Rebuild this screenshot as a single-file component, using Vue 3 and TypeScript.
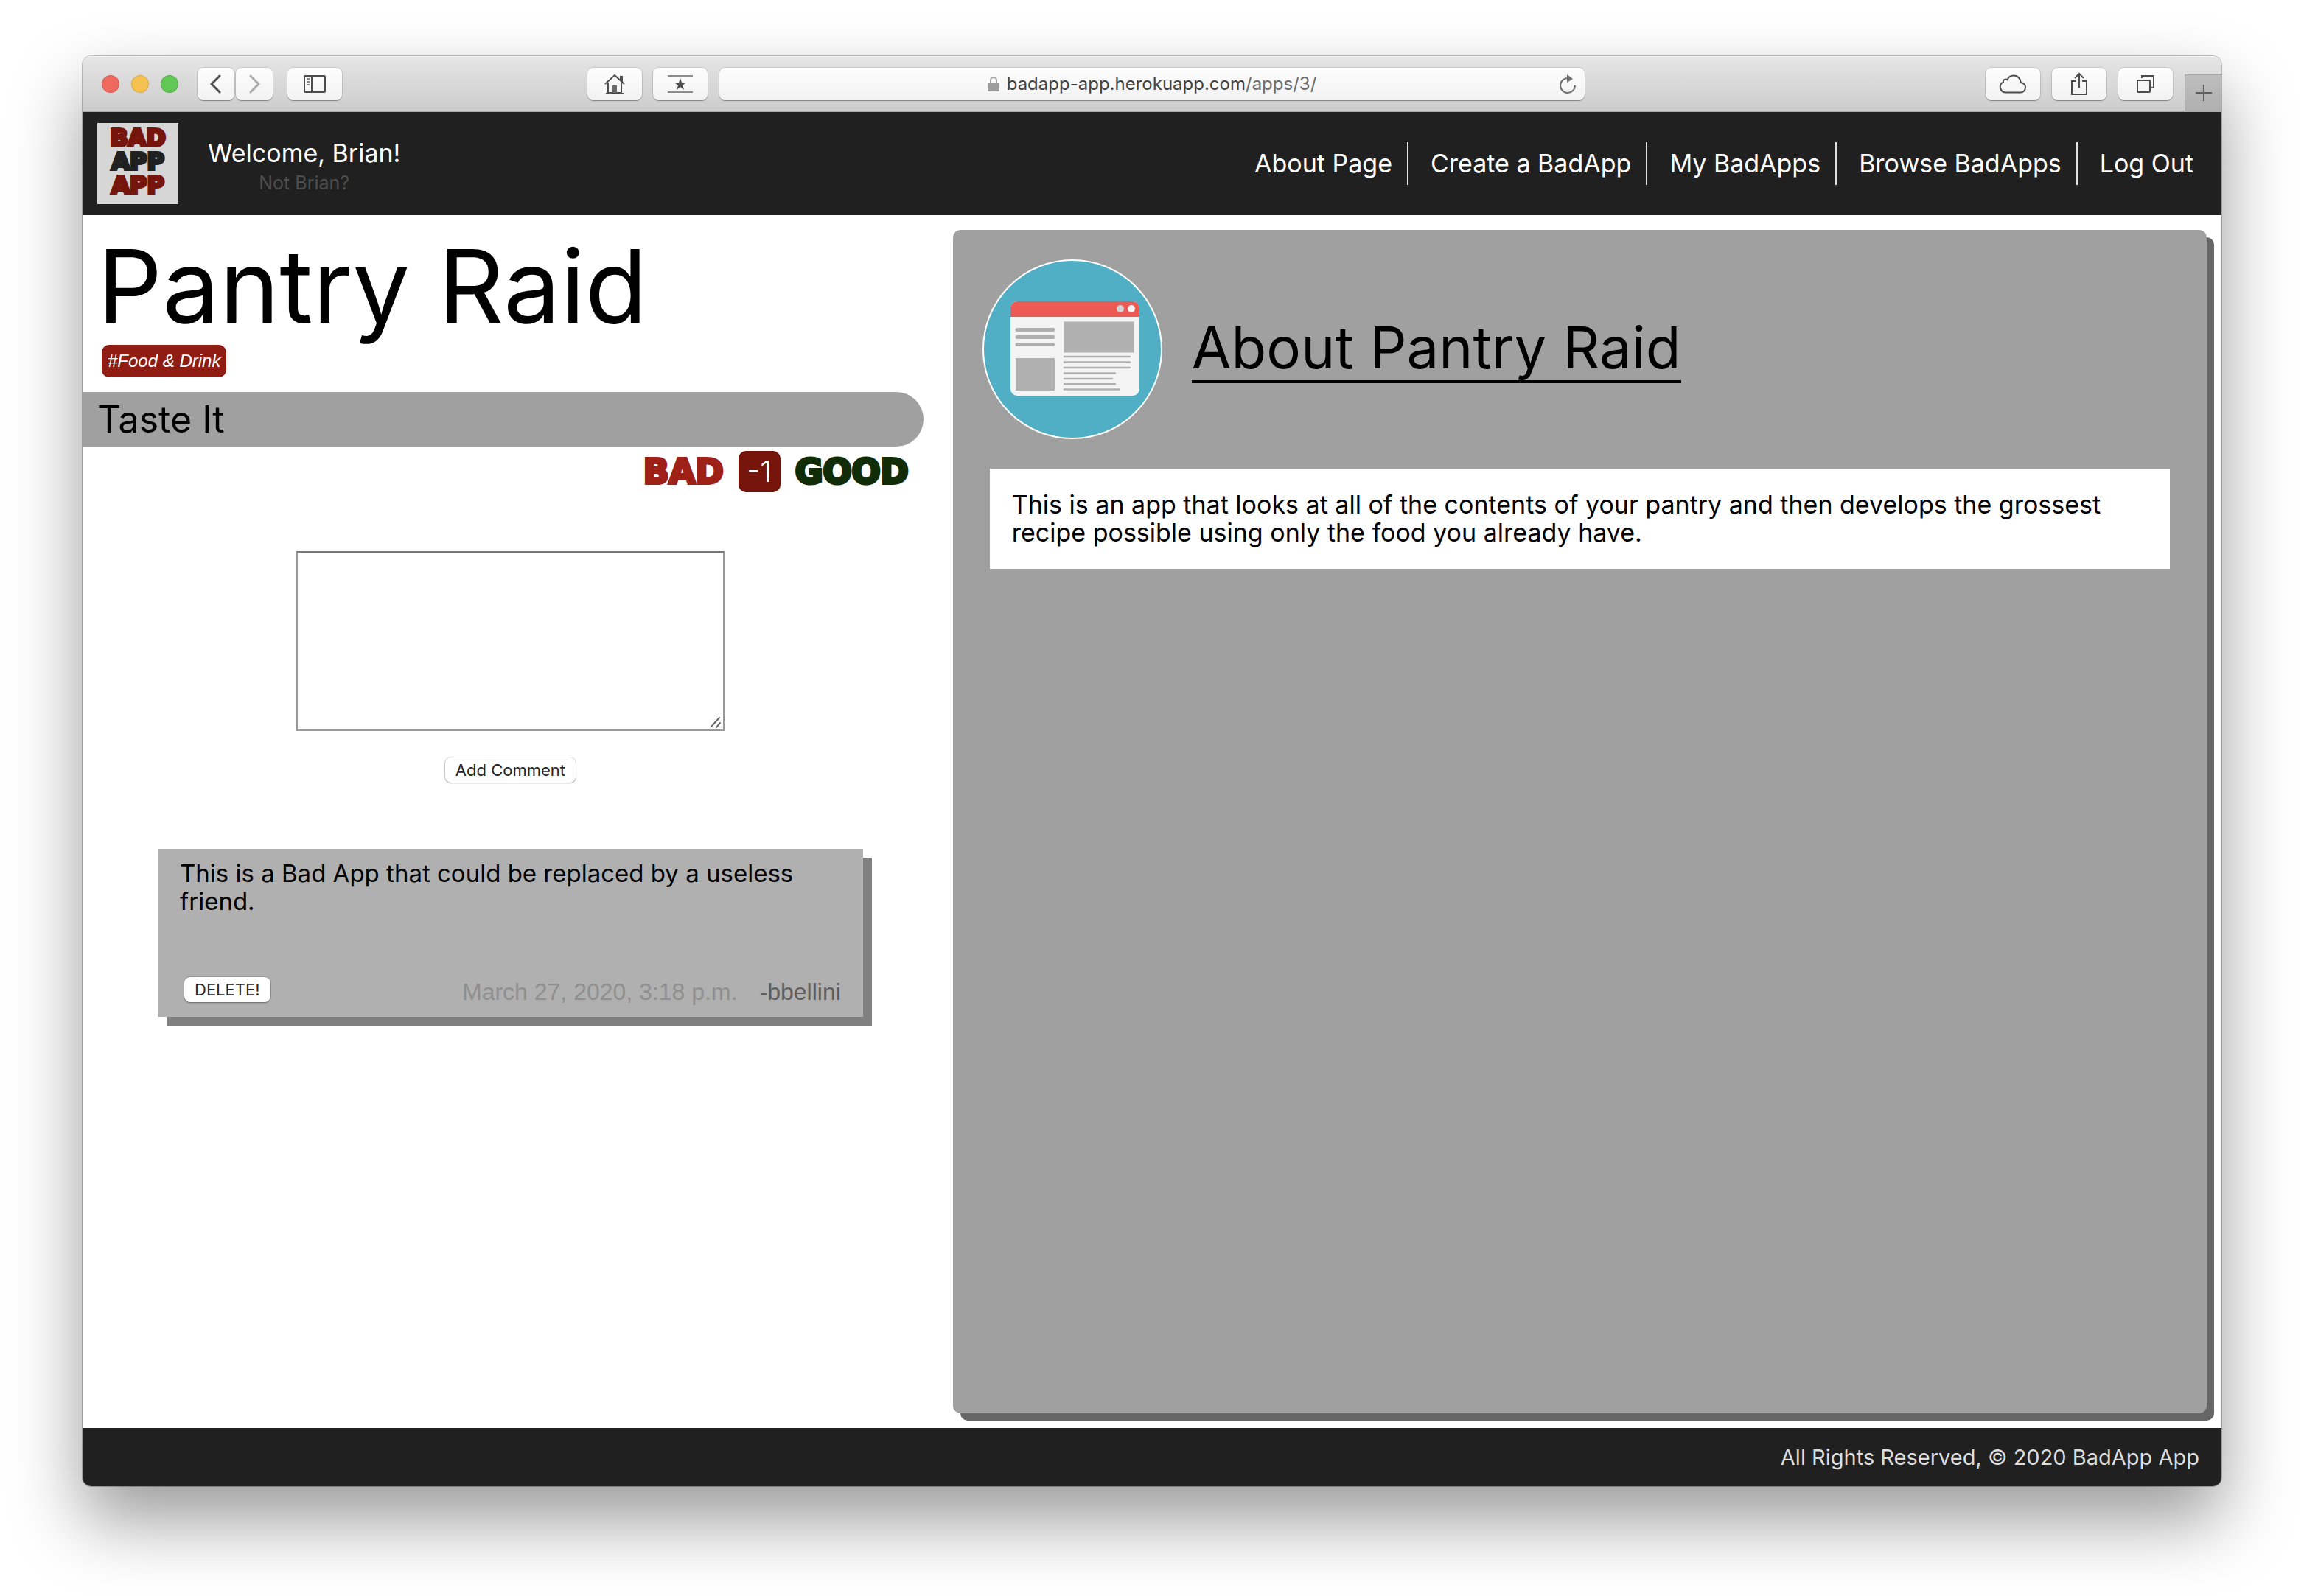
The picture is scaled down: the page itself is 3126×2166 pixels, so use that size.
<script setup lang="ts">
import { ref } from 'vue'

interface NavLink {
  label: string
  href: string
}

interface Comment {
  id: number
  body: string
  date: string
  author: string
}

const links: NavLink[] = [
  { label: 'About Page', href: '#about' },
  { label: 'Create a BadApp', href: '#create' },
  { label: 'My BadApps', href: '#mine' },
  { label: 'Browse BadApps', href: '#browse' },
  { label: 'Log Out', href: '#logout' },
]

const comments = ref<Comment[]>([
  {
    id: 1,
    body: 'This is a Bad App that could be replaced by a useless friend.',
    date: 'March 27, 2020, 3:18 p.m.',
    author: '-bbellini',
  },
])

const score = ref(-1)
const draft = ref('')

function addComment(): void {
  const body = draft.value.trim()
  if (!body) return
  comments.value.push({ id: Date.now(), body, date: new Date().toLocaleString(), author: '-bbellini' })
  draft.value = ''
}

function removeComment(id: number): void {
  comments.value = comments.value.filter((c) => c.id !== id)
}
</script>

<template>
  <div class="stage">
    <div class="window">
      <div class="toolbar">
        <div class="tools">
          <div class="lights">
            <span class="light red"></span>
            <span class="light amber"></span>
            <span class="light green"></span>
          </div>
          <div class="history">
            <button class="tool narrow" type="button" aria-label="Back">
              <svg width="16" height="26" viewBox="0 0 16 26"><path d="M13 2 2 13l11 11" fill="none" stroke="#4c4c4c" stroke-width="3" stroke-linecap="round" /></svg>
            </button>
            <button class="tool narrow" type="button" aria-label="Forward">
              <svg width="16" height="26" viewBox="0 0 16 26"><path d="M3 2 14 13 3 24" fill="none" stroke="#a9a9a9" stroke-width="3" stroke-linecap="round" /></svg>
            </button>
          </div>
          <button class="tool" type="button" aria-label="Sidebar">
            <svg width="30" height="24" viewBox="0 0 30 24">
              <rect x="1" y="1" width="28" height="22" rx="1" fill="none" stroke="#4c4c4c" stroke-width="2" />
              <path d="M11 1v22" stroke="#4c4c4c" stroke-width="2" />
              <path d="M4 5h4M4 9h4M4 13h4" stroke="#8a8a8a" stroke-width="2" />
            </svg>
          </button>
          <div class="favorites">
            <button class="tool" type="button" aria-label="Home">
              <svg width="28" height="28" viewBox="0 0 28 28">
                <path d="M1 14 14 2l13 12M22 9V4h2v7M5 12v14h18V12" fill="none" stroke="#4c4c4c" stroke-width="2" />
                <path d="M2 27h24" stroke="#4c4c4c" stroke-width="2" />
                <path d="M11 26V16h6v10z" fill="#6a6a6a" />
              </svg>
            </button>
            <button class="tool" type="button" aria-label="Top sites">
              <svg width="34" height="24" viewBox="0 0 34 24">
                <path d="M0 1h34M0 23h34" stroke="#8c8c8c" stroke-width="2" />
                <path d="M17 4l2 6h6l-5 4 2 6-5-4-5 4 2-6-5-4h6z" fill="#4c4c4c" />
              </svg>
            </button>
          </div>
        </div>

        <div class="address">
          <div class="location">
            <svg width="16" height="21" viewBox="0 0 16 21">
              <path d="M4 10V6a4 4 0 0 1 8 0v4" fill="none" stroke="#a0a0a0" stroke-width="2" />
              <rect y="9" width="16" height="12" rx="1" fill="#9c9c9c" />
            </svg>
            <span>badapp-app.herokuapp.com<span class="path">/apps/3/</span></span>
          </div>
          <button class="reload" type="button" aria-label="Reload">
            <svg width="26" height="28" viewBox="0 0 26 28">
              <path d="M15 6.2A10 10 0 1 0 23 16" fill="none" stroke="#6e6e6e" stroke-width="2" />
              <path d="M12 1v11l8-5z" fill="#6e6e6e" />
            </svg>
          </button>
        </div>

        <div class="tools end">
          <button class="tool" type="button" aria-label="iCloud tabs">
            <svg width="38" height="26" viewBox="0 0 38 26">
              <path d="M9 24.500a7.500 7.500 0 0 1-3-14.200C5.500 7 9 5.500 11.500 7.200 13 3.500 16.500 1.500 20 1.500c5.500 0 9.500 4 9.500 9.500 4 .5 6.500 3.300 6.500 6.800 0 3.900-3 6.700-6.700 6.700z" fill="none" stroke="#4c4c4c" stroke-width="2" />
            </svg>
          </button>
          <button class="tool" type="button" aria-label="Share">
            <svg width="24" height="32" viewBox="0 0 24 32">
              <path d="M8 12H2v18h20V12h-6M12 21V3M6 8l6-6 6 6" fill="none" stroke="#4c4c4c" stroke-width="2" />
            </svg>
          </button>
          <button class="tool" type="button" aria-label="Show tabs">
            <svg width="26" height="26" viewBox="0 0 26 26">
              <rect x="2" y="8" width="17" height="16" rx="1" fill="none" stroke="#4c4c4c" stroke-width="2" />
              <path d="M8 5V2h16v16h-3" fill="none" stroke="#4c4c4c" stroke-width="2" />
            </svg>
          </button>
          <button class="new-tab" type="button" aria-label="New tab">
            <svg width="22" height="22" viewBox="0 0 22 22"><path d="M11 0v22M0 11h22" stroke="#5e5e5e" stroke-width="2" /></svg>
          </button>
        </div>
      </div>

      <header class="site-header">
        <a class="logo" href="#home">
          <span>BAD</span>
          <span class="dark">APP</span>
          <span>APP</span>
        </a>
        <div class="greeting">
          <span class="welcome">Welcome, Brian!</span>
          <a class="switch" href="#switch">Not Brian?</a>
        </div>
        <nav class="menu">
          <a v-for="link in links" :key="link.label" :href="link.href">{{ link.label }}</a>
        </nav>
      </header>

      <main class="content">
        <section class="left">
          <h1>Pantry Raid</h1>
          <a class="tag" href="#food-drink">#Food &amp; Drink</a>
          <h2 class="tagline">Taste It</h2>

          <div class="votes">
            <button class="vote bad" type="button" @click="score--">BAD</button>
            <span class="score">{{ score }}</span>
            <button class="vote good" type="button" @click="score++">GOOD</button>
          </div>

          <form class="comment-form" @submit.prevent="addComment">
            <div class="field">
              <textarea v-model="draft" aria-label="Comment"></textarea>
              <svg class="grip" width="16" height="16" viewBox="0 0 16 16">
                <path d="M2 14 13 2M9 15l5-6" stroke="#666" stroke-width="2" stroke-linecap="round" />
              </svg>
            </div>
            <button class="mac-button" type="submit">Add Comment</button>
          </form>

          <article v-for="c in comments" :key="c.id" class="comment">
            <p>{{ c.body }}</p>
            <div class="meta">
              <button class="mac-button" type="button" @click="removeComment(c.id)">DELETE!</button>
              <time>{{ c.date }}</time>
              <span class="author">{{ c.author }}</span>
            </div>
          </article>
        </section>

        <section class="about">
          <div class="about-head">
            <svg class="badge" width="244" height="244" viewBox="0 0 244 244">
              <circle cx="122" cy="122" r="121" fill="#50afc4" stroke="#fff" stroke-width="2" />
              <rect x="38" y="57" width="175" height="128" rx="9" fill="#f4f4f4" />
              <path d="M38 78V66a9 9 0 0 1 9-9h157a9 9 0 0 1 9 9v12z" fill="#ec5a53" />
              <circle cx="187" cy="67" r="5" fill="#d2d2d2" />
              <circle cx="202" cy="67" r="5" fill="#f4f4f4" />
              <rect x="110.500" y="84.500" width="95" height="42" fill="#b0b0b0" stroke="#cfcfcf" />
              <rect x="45" y="134" width="53" height="44" rx="1" fill="#b0b0b0" />
              <path d="M47 95.500h49M47 105.500h49M47 115.500h49" stroke="#b0b0b0" stroke-width="5" stroke-linecap="round" />
              <path d="M111 132h89M111 139.500h89M111 147h89M111 154.500h69M111 162h65M111 169.300h69M111 176.600h75" stroke="#b0b0b0" stroke-width="2.500" stroke-linecap="round" />
            </svg>
            <h2>About Pantry Raid</h2>
          </div>
          <p class="description">
            This is an app that looks at all of the contents of your pantry and then develops the grossest recipe
            possible using only the food you already have.
          </p>
        </section>
      </main>

      <footer class="site-footer">All Rights Reserved, © 2020 BadApp App</footer>
    </div>
  </div>
</template>

<style>
body {
  margin: 0;
  background: #fff;
}
</style>

<style scoped>
* {
  box-sizing: border-box;
}

button {
  padding: 0;
  border: 0;
  background: none;
  cursor: pointer;
}

h1,
h2,
p {
  margin: 0;
  font-weight: 400;
}

a {
  text-decoration: none;
}

.stage {
  display: flex;
  min-height: 100vh;
  padding: 76px 112px 149px;
  overflow: hidden;
  color: #000;
  font-family: Inter, "Liberation Sans", sans-serif;
}

.window {
  display: flex;
  flex: 1;
  flex-direction: column;
  min-width: 0;
  overflow: hidden;
  border-radius: 12px;
  background: #fff;
  box-shadow: 0 0 0 1px rgba(0, 0, 0, 0.24), 0 46px 96px rgba(0, 0, 0, 0.4);
}

/* Browser toolbar */
.toolbar {
  display: grid;
  grid-template-columns: 1fr minmax(0, 1174px) 1fr;
  gap: 16px;
  align-items: center;
  height: 76px;
  border-top: 1px solid #f4f4f4;
  border-bottom: 2px solid #acacac;
  background: linear-gradient(#e5e5e5, #cdcdcd);
}

.tools {
  display: flex;
  align-items: center;
  gap: 20px;
  padding-left: 26px;
}

.lights {
  display: flex;
  gap: 16px;
  margin-right: 6px;
}

.light {
  width: 24px;
  height: 24px;
  border: 1px solid rgba(0, 0, 0, 0.12);
  border-radius: 50%;
}

.red {
  background: #ee6a5f;
}

.amber {
  background: #f5c150;
}

.green {
  background: #62c855;
}

.history {
  display: flex;
  gap: 2px;
}

.favorites {
  display: flex;
  gap: 15px;
  margin-left: auto;
}

.tool {
  display: flex;
  align-items: center;
  justify-content: center;
  width: 74px;
  height: 44px;
  border-radius: 8px;
  background: linear-gradient(#fdfdfd, #f2f2f2);
  box-shadow: 0 0 0 1px rgba(0, 0, 0, 0.1), 0 1px 1px rgba(0, 0, 0, 0.3);
}

.tool.narrow {
  width: 50px;
}

.address {
  display: flex;
  align-items: center;
  height: 44px;
  padding: 0 10px 0 36px;
  border-radius: 8px;
  background: linear-gradient(#fdfdfd, #f2f2f2);
  box-shadow: 0 0 0 1px rgba(0, 0, 0, 0.1), 0 1px 1px rgba(0, 0, 0, 0.3);
}

.location {
  display: flex;
  flex: 1;
  align-items: center;
  justify-content: center;
  gap: 10px;
  color: #424242;
  font-size: 24px;
  line-height: 32px;
}

.path {
  color: #6c6c6c;
}

.reload {
  display: flex;
}

.end {
  align-self: stretch;
  justify-content: flex-end;
  gap: 16px;
  padding-left: 0;
}

.new-tab {
  display: flex;
  align-items: center;
  align-self: flex-end;
  justify-content: center;
  width: 50px;
  height: 49px;
  border-top: 1px solid #a6a6a6;
  border-left: 1px solid #a6a6a6;
  background: linear-gradient(#bebebe, #b0b0b0);
}

/* Site header */
.site-header {
  display: flex;
  align-items: center;
  height: 140px;
  padding: 0 38px 0 20px;
  background: #202020;
}

.logo {
  display: flex;
  flex-direction: column;
  align-items: center;
  width: 110px;
  height: 110px;
  padding-top: 4px;
  background: #d6d6d6;
  color: #76150c;
  font: 700 32px/32px "DejaVu Sans", sans-serif;
  -webkit-text-stroke: 4px currentColor;
}

.logo .dark {
  color: #202020;
}

.greeting {
  display: flex;
  flex-direction: column;
  align-items: center;
  margin-left: 40px;
  padding-top: 10px;
  color: #fff;
}

.welcome {
  font-size: 34px;
  line-height: 42px;
}

.switch {
  color: #4d4d4d;
  font-size: 25px;
  line-height: 38px;
}

.menu {
  display: flex;
  margin-left: auto;
}

.menu a {
  padding-right: 20px;
  border-right: 2px solid #e0e0e0;
  color: #fff;
  font-size: 34px;
  line-height: 58px;
}

.menu a + a {
  margin-left: 30px;
}

.menu a:last-child {
  padding-right: 0;
  border-right: 0;
}

/* Page body */
.content {
  display: grid;
  flex: 1;
  grid-template-columns: 2fr 3fr;
}

.left {
  display: flex;
  flex-direction: column;
  padding-right: 20px;
}

h1 {
  margin: 18px 0 2px 20px;
  font-size: 138px;
  line-height: 156px;
}

.tag {
  align-self: flex-start;
  margin-left: 26px;
  padding: 0 8px;
  border-radius: 10px;
  background: #8f1d13;
  color: #fff;
  font: italic 24px/44px "Liberation Sans", sans-serif;
}

.tagline {
  margin-top: 20px;
  padding-left: 20px;
  border-radius: 0 37px 37px 0;
  background: #a0a0a0;
  font-size: 50px;
  line-height: 74px;
}

.votes {
  display: flex;
  align-items: center;
  justify-content: flex-end;
  gap: 20px;
  margin-top: 6px;
  padding-right: 20px;
}

.vote {
  font: 700 46px/56px "DejaVu Sans", sans-serif;
  -webkit-text-stroke: 4px currentColor;
}

.bad {
  color: #9e2016;
}

.good {
  color: #112d07;
}

.score {
  min-width: 57px;
  border-radius: 10px;
  background: #76150c;
  color: #fff;
  font-size: 40px;
  font-weight: 300;
  line-height: 56px;
  text-align: center;
}

.comment-form {
  display: flex;
  flex-direction: column;
  align-items: center;
  gap: 36px;
  margin: 80px -20px 0 0;
}

.field {
  position: relative;
  display: flex;
  width: 50%;
}

textarea {
  width: 100%;
  height: 244px;
  padding: 8px;
  border: 2px solid #999;
  border-top-color: #767676;
  border-radius: 0;
  outline: 0;
  background: #fff;
  font: 26px/32px "Liberation Mono", monospace;
  resize: none;
}

.grip {
  position: absolute;
  right: 4px;
  bottom: 4px;
  pointer-events: none;
}

.mac-button {
  padding: 0 14px;
  border-radius: 8px;
  background: #fff;
  color: #262626;
  font: 22px/34px Inter, "Liberation Sans", sans-serif;
  box-shadow: 0 0 0 1px rgba(0, 0, 0, 0.14), 0 1px 2px rgba(0, 0, 0, 0.3);
}

.comment {
  display: flex;
  flex-direction: column;
  justify-content: space-between;
  min-height: 228px;
  margin: 90px 82px 0 102px;
  padding: 14px 30px;
  background: #b0b0b0;
  box-shadow: 12px 12px #808080;
}

.comment p {
  font-size: 33px;
  line-height: 38px;
}

.meta {
  display: flex;
  align-items: flex-start;
  gap: 30px;
  font: 32px/40px "Liberation Sans", sans-serif;
}

.meta .mac-button {
  margin-left: 6px;
}

.meta time {
  margin-left: auto;
  color: #8f8f8f;
}

.author {
  color: #5e5e5e;
}

/* About panel */
.about {
  margin: 20px;
  padding: 40px;
  border-radius: 10px;
  background: #a0a0a0;
  box-shadow: 10px 10px #666;
}

.about-head {
  display: flex;
  align-items: center;
  gap: 40px;
}

.badge {
  flex: none;
}

.about-head h2 {
  border-bottom: 4px solid #000;
  font-size: 78px;
  line-height: 88px;
}

.description {
  margin: 40px 10px 0;
  padding: 30px;
  background: #fff;
  font-size: 34px;
  line-height: 38px;
}

.site-footer {
  padding-right: 30px;
  background: #202020;
  color: #ddd;
  font-size: 29px;
  line-height: 79px;
  text-align: right;
}
</style>
